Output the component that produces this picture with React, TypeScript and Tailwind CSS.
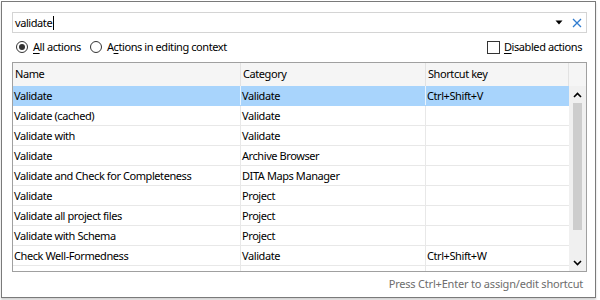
import React from 'react';

type Row = { name: string; category: string; shortcut?: string };

const rows: Row[] = [
  { name: 'Validate', category: 'Validate', shortcut: 'Ctrl+Shift+V' },
  { name: 'Validate (cached)', category: 'Validate' },
  { name: 'Validate with', category: 'Validate' },
  { name: 'Validate', category: 'Archive Browser' },
  { name: 'Validate and Check for Completeness', category: 'DITA Maps Manager' },
  { name: 'Validate', category: 'Project' },
  { name: 'Validate all project files', category: 'Project' },
  { name: 'Validate with Schema', category: 'Project' },
  { name: 'Check Well-Formedness', category: 'Validate', shortcut: 'Ctrl+Shift+W' },
  { name: 'Configure Validation Scenarios', category: 'Validate' },
];

const font = { fontFamily: '"Noto Sans", "Open Sans", sans-serif' };

const App: React.FC = () => {
  return (
    <div className="w-[600px] h-[300px] bg-white overflow-hidden text-[11px] text-black tracking-[-0.42px]" style={font}>
      <div className="ml-[1px] mt-[1px] w-[595px] h-[297px] border border-[#7a7a7a] shadow-[0_2px_2px_rgba(0,0,0,0.18)] flex flex-col pl-[10px] pr-[8px] pt-[10px]">
        {/* Search field */}
        <div className="h-[21px] border border-[#d4d4d4] flex items-center pl-[2px] pr-[4px] shrink-0">
          <span className="leading-none">validate</span>
          <span className="w-px h-[14px] bg-black ml-[1px]" />
          <div className="flex-1" />
          <svg width="8" height="5" viewBox="0 0 8 5" className="mr-[9px]">
            <path d="M0.5 0.5 L7.5 0.5 L4 4.5 Z" fill="#000" />
          </svg>
          <svg width="10" height="10" viewBox="0 0 10 10">
            <path d="M1 1 L9 9 M9 1 L1 9" stroke="#2f7cd0" strokeWidth="1.3" fill="none" />
          </svg>
        </div>

        {/* Options row */}
        <div className="h-[20px] mt-[4px] flex items-center shrink-0">
          <div className="ml-[4px] w-[12px] h-[12px] rounded-full border border-[#333] flex items-center justify-center">
            <div className="w-[6px] h-[6px] rounded-full bg-[#333]" />
          </div>
          <span className="ml-[5px]"><span className="underline underline-offset-2">A</span>ll actions</span>
          <div className="ml-[9px] w-[12px] h-[12px] rounded-full border border-[#333]" />
          <span className="ml-[5px]">A<span className="underline underline-offset-2">c</span>tions in editing context</span>
          <div className="flex-1" />
          <div className="w-[13px] h-[13px] border border-[#333]" />
          <span className="ml-[4px] mr-[5px]"><span className="underline underline-offset-2">D</span>isabled actions</span>
        </div>

        {/* Table */}
        <div className="mt-[5px] h-[210px] border border-[#a0a0a0] flex flex-col overflow-hidden shrink-0">
          <div className="h-[23px] flex bg-[#f5f5f5] shrink-0">
            <div className="w-[228px] border-r border-[#e2e2e2] flex items-center pl-[2px]">Name</div>
            <div className="w-[185px] border-r border-[#e2e2e2] flex items-center pl-[2px]">Category</div>
            <div className="w-[143px] border-r border-[#e2e2e2] flex items-center pl-[2px]">Shortcut key</div>
            <div className="flex-1" />
          </div>
          <div className="flex flex-1 overflow-hidden">
            <div className="w-[556px] overflow-hidden">
              {rows.map((r, i) => (
                <div
                  key={i}
                  className={`h-[20px] flex border-b ${i === 0 ? 'bg-[#a8d4fc] border-[#a8d4fc]' : 'border-[#e8e8e8]'}`}
                >
                  <div className={`w-[228px] border-r flex items-center pl-[1px] pt-px ${i === 0 ? 'border-[#e8f3fd]' : 'border-[#e8e8e8]'}`}>{r.name}</div>
                  <div className={`w-[185px] border-r flex items-center pl-[1px] pt-px ${i === 0 ? 'border-[#e8f3fd]' : 'border-[#e8e8e8]'}`}>{r.category}</div>
                  <div className="flex-1 flex items-center pl-[1px] pt-px">{r.shortcut}</div>
                </div>
              ))}
            </div>
            {/* Scrollbar */}
            <div className="w-[17px] bg-[#f0f0f0] flex flex-col items-center">
              <div className="h-[17px] flex items-center justify-center">
                <svg width="9" height="6" viewBox="0 0 9 6">
                  <path d="M1 5 L4.5 1.5 L8 5" stroke="#000" strokeWidth="1.6" fill="none" />
                </svg>
              </div>
              <div className="w-[9px] h-[127px] bg-[#cdcdcd]" />
              <div className="flex-1" />
              <div className="h-[17px] flex items-center justify-center">
                <svg width="9" height="6" viewBox="0 0 9 6">
                  <path d="M1 1 L4.5 4.5 L8 1" stroke="#000" strokeWidth="1.6" fill="none" />
                </svg>
              </div>
            </div>
          </div>
        </div>

        {/* Footer hint */}
        <div className="h-[25px] flex items-center justify-end pr-[4px] text-[#6d6d6d] tracking-[-0.2px]">
          Press Ctrl+Enter to assign/edit shortcut
        </div>
      </div>
    </div>
  );
};

export default App;
